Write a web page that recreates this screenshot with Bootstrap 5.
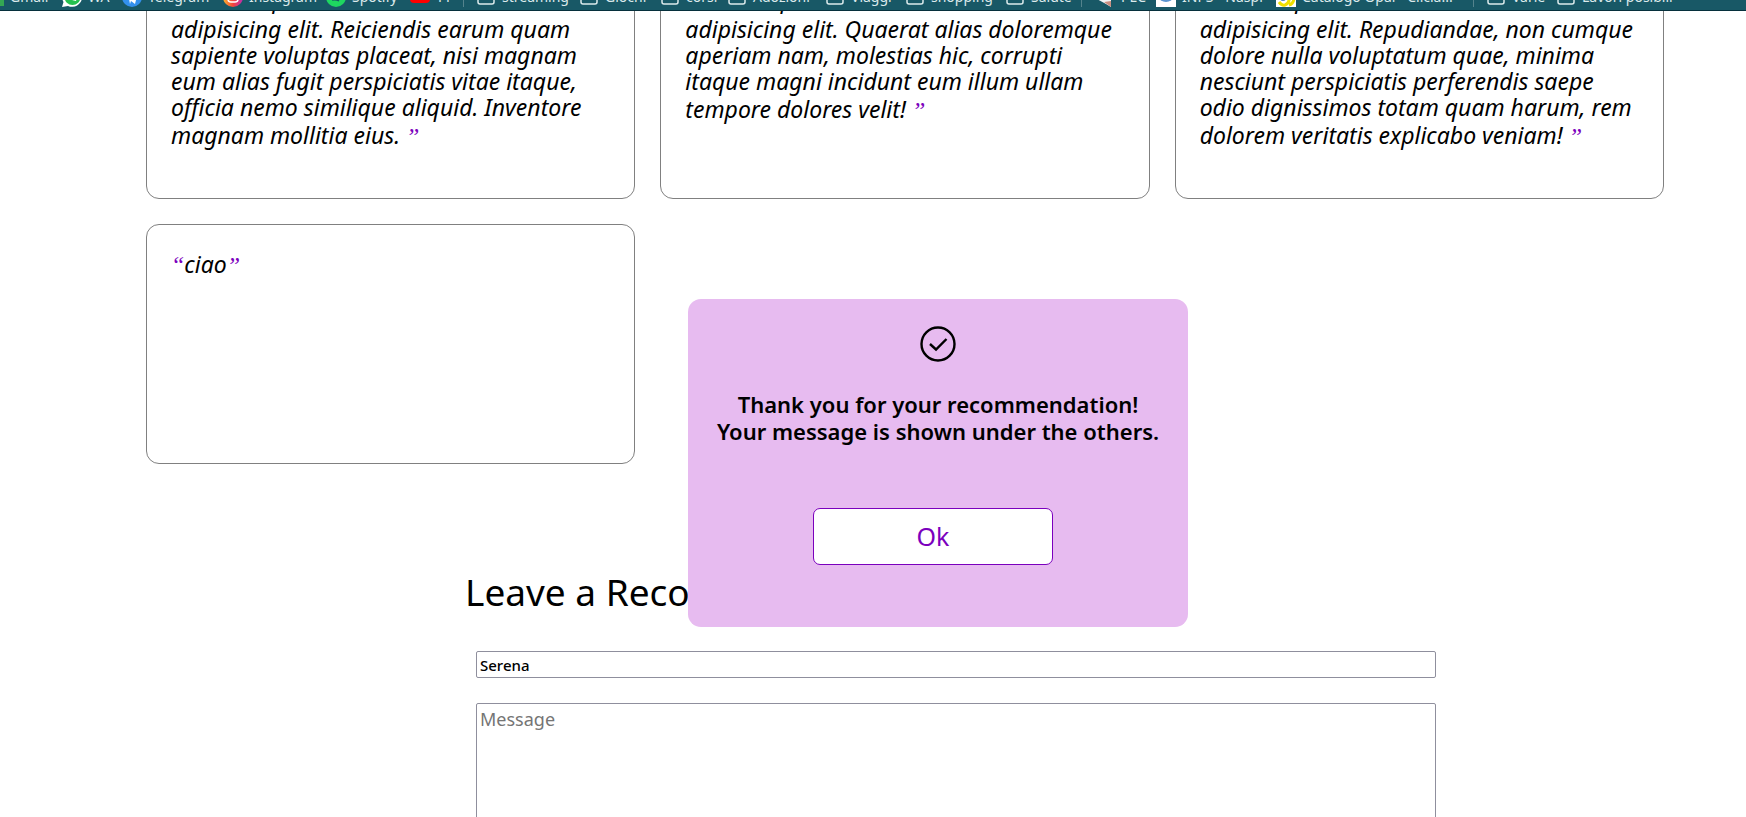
<!DOCTYPE html>
<html lang="en">
<head>
<meta charset="utf-8">
<meta name="viewport" content="width=device-width, initial-scale=1">
<title>Recommendations</title>
<link href="https://cdn.jsdelivr.net/npm/bootstrap@5.3.0/dist/css/bootstrap.min.css" rel="stylesheet">
<style>
  body { font-family: "Trebuchet MS", "Noto Sans", sans-serif; color: #000; background: #fff; overflow-x: hidden; }
  .bookmarks { height: 11px; background: #185866; border-bottom: 1px solid #06303c; padding-bottom: 3px; overflow: hidden; font: 14px/20px "Noto Sans", sans-serif; }
  .bookmarks-row { display: grid; height: 20px; margin-left: -16px;
    grid-template-columns: 78px 60px 101px 103px 84px 53px 13px 103px 81px 67px 98px 80px 100px 76px 14px 61px 120px 197px 13px 70px 140px; }
  .bookmarks a { color: #dceaec; text-decoration: none; white-space: nowrap; display: flex; align-items: center; gap: 6px; }
  .bookmarks svg { width: 20px; height: 20px; flex: none; }
  .divide { width: 1px; background: #54838d; }
  .quotes { display: grid; grid-template-columns: repeat(3, 1fr); gap: 25px; margin: -45px 82px 0 146px; }
  .quote-card { min-height: 240px; border: 1px solid #808080; border-radius: 13px; padding: 24px; font-style: italic; font-size: 23px; line-height: 26px; font-variant-ligatures: none; white-space: nowrap; }
  .quote-card p { margin: 0; }
  .qm { font: italic 24px/32px "Liberation Serif", serif; color: #7b00bd; }
  .leave { margin: 104px 0 0 465px; }
  .leave h2 { font-size: 37px; line-height: 48px; margin: 0 0 35px; }
  .fields { width: 55vw; margin-left: 11px; }
  .field { display: block; width: 100%; border: 1px solid #8f8f9d; border-radius: 2px; padding: 1px 3px; color: #000; background: #fff; outline: 0; }
  .name-field { height: 27px; font-size: 15px; font-weight: 500; margin-bottom: 25px; }
  .message-field { height: 200px; font-size: 18px; line-height: 28px; resize: none; }
  .message-field::placeholder { color: #757575; }
  .thanks { position: fixed; top: 299px; left: calc(50% - 185px); width: 500px; height: 328px; background: #e7bbf0; border-radius: 13px; padding-top: 26px; text-align: center; }
  .thanks p { font-weight: 600; font-size: 22px; line-height: 27px; margin: 28px 0 63px; white-space: nowrap; }
  .ok-btn { width: 240px; height: 57px; border: 1px solid #7b00bd; border-radius: 7px; background: #fff; color: #7b00bd; font-size: 25px; margin-right: 10px; }
</style>
</head>
<body>
<svg width="0" height="0" class="position-absolute" aria-hidden="true">
  <symbol id="folder" viewBox="0 0 20 20"><path d="M2 4h5l2 2h7.500q1.500 0 1.500 1.500v7.500q0 2-2 2h-12q-2 0-2-2z" fill="none" stroke="#dceaec" stroke-width="1.500"/></symbol>
</svg>
<nav class="bookmarks fixed-top d-flex align-items-end" aria-label="Bookmarks">
  <div class="bookmarks-row">
    <a href="#"><svg viewBox="0 0 20 20"><path d="M16 3h4v16h-4z" fill="#34a853"/></svg>Gmail</a>
    <a href="#"><svg viewBox="0 0 20 20"><path d="M0 20l1.500-5A10 10 0 1 1 6 19z" fill="#fff"/><circle cx="10.500" cy="10" r="8" fill="#25c04f"/><path d="M6 7q0 6 8 7l1-3-3-1-1 1q-2-1-2-3l-1-2z" fill="#fff"/></svg>WA</a>
    <a href="#"><svg viewBox="0 0 20 20"><circle cx="10" cy="10" r="10" fill="#3390ec"/><path d="M4 10l12-5-3 12-4-3-1 3-1-5z" fill="#fff"/></svg>Telegram</a>
    <a href="#"><svg viewBox="0 0 20 20"><defs><linearGradient id="insta"><stop stop-color="#fdb52b"/><stop offset=".5" stop-color="#f3443c"/><stop offset="1" stop-color="#c02bb2"/></linearGradient></defs><circle cx="10" cy="10" r="10" fill="url(#insta)"/><rect x="5" y="5" width="10" height="10" rx="3" fill="none" stroke="#fff" stroke-width="1.500"/><circle cx="10" cy="10" r="2.500" fill="none" stroke="#fff"/></svg>Instagram</a>
    <a href="#"><svg viewBox="0 0 20 20"><circle cx="10" cy="10" r="10" fill="#1ed760"/><path d="M5 7q6-2 11 1M5 10q5-1 9 1M6 13q4-1 7 1" fill="none" stroke="#185866" stroke-width="1.500"/></svg>Spotify</a>
    <a href="#"><svg viewBox="0 0 20 20"><rect y="2" width="20" height="14" rx="4" fill="#f00"/><path d="M8 6l5 3-5 3z" fill="#fff"/></svg>YT</a>
    <span class="divide"></span>
    <a href="#"><svg><use href="#folder"/></svg>streaming</a>
    <a href="#"><svg><use href="#folder"/></svg>Giochi</a>
    <a href="#"><svg><use href="#folder"/></svg>corsi</a>
    <a href="#"><svg><use href="#folder"/></svg>Adozioni</a>
    <a href="#"><svg><use href="#folder"/></svg>Viaggi</a>
    <a href="#"><svg><use href="#folder"/></svg>shopping</a>
    <a href="#"><svg><use href="#folder"/></svg>Salute</a>
    <span class="divide"></span>
    <a href="#"><svg viewBox="0 0 20 20"><path d="M0 11l16-8v17l-5-3z" fill="#f4f4f6"/><path d="M9 15l7 5v-6z" fill="#c98d80"/></svg>PEC</a>
    <a href="#"><svg viewBox="0 0 20 20"><path d="M0 0h20v20H0z" fill="#fff"/><ellipse cx="10" cy="10" rx="7" ry="5" fill="#5b95d0"/></svg>INPS - Naspi</a>
    <a href="#"><svg viewBox="0 0 20 20"><path d="M0 0h20v20H0z" fill="#fff"/><path d="M3 15q3 4 6 3 5-2 4-8M13 18q5-1 5-8" fill="none" stroke="#efe000" stroke-width="3"/><circle cx="7" cy="11" r="3" fill="#4b83c4"/></svg>Catalogo Opal - Clicia...</a>
    <span class="divide"></span>
    <a href="#"><svg><use href="#folder"/></svg>Varie</a>
    <a href="#"><svg><use href="#folder"/></svg>Lavori posibili</a>
  </div>
</nav>
<main class="pt-1">
  <section class="quotes">
    <article class="quote-card"><p><span class="qm">“ </span>Lorem, ipsum dolor sit amet consectetur<br>adipisicing elit. Reiciendis earum quam<br>sapiente voluptas placeat, nisi magnam<br>eum alias fugit perspiciatis vitae itaque,<br>officia nemo similique aliquid. Inventore<br>magnam mollitia eius. <span class="qm">”</span></p></article>
    <article class="quote-card"><p><span class="qm">“ </span>Lorem ipsum dolor sit amet consectetur<br>adipisicing elit. Quaerat alias doloremque<br>aperiam nam, molestias hic, corrupti<br>itaque magni incidunt eum illum ullam<br>tempore dolores velit! <span class="qm">”</span></p></article>
    <article class="quote-card"><p><span class="qm">“ </span>Lorem ipsum, dolor sit amet consectetur<br>adipisicing elit. Repudiandae, non cumque<br>dolore nulla voluptatum quae, minima<br>nesciunt perspiciatis perferendis saepe<br>odio dignissimos totam quam harum, rem<br>dolorem veritatis explicabo veniam! <span class="qm">”</span></p></article>
    <article class="quote-card"><p><span class="qm">“</span>ciao<span class="qm">”</span></p></article>
  </section>
  <section class="leave">
    <h2 class="fw-normal">Leave a Recommendation</h2>
    <form class="fields">
      <input class="field name-field" type="text" aria-label="Name" value="Serena">
      <textarea class="field message-field" aria-label="Message" placeholder="Message"></textarea>
    </form>
  </section>
</main>
<div class="thanks" role="dialog" aria-label="Recommendation sent">
  <svg width="38" height="38" viewBox="0 0 38 38" class="d-block mx-auto" fill="none" stroke="#000" stroke-width="2.400"><circle cx="19" cy="19" r="16.500"/><path d="M11 19l6 5.500L27.500 14"/></svg>
  <p>Thank you for your recommendation!<br>Your message is shown under the others.</p>
  <button type="button" class="ok-btn">Ok</button>
</div>
<script src="https://cdn.jsdelivr.net/npm/bootstrap@5.3.0/dist/js/bootstrap.bundle.min.js"></script>
</body>
</html>
